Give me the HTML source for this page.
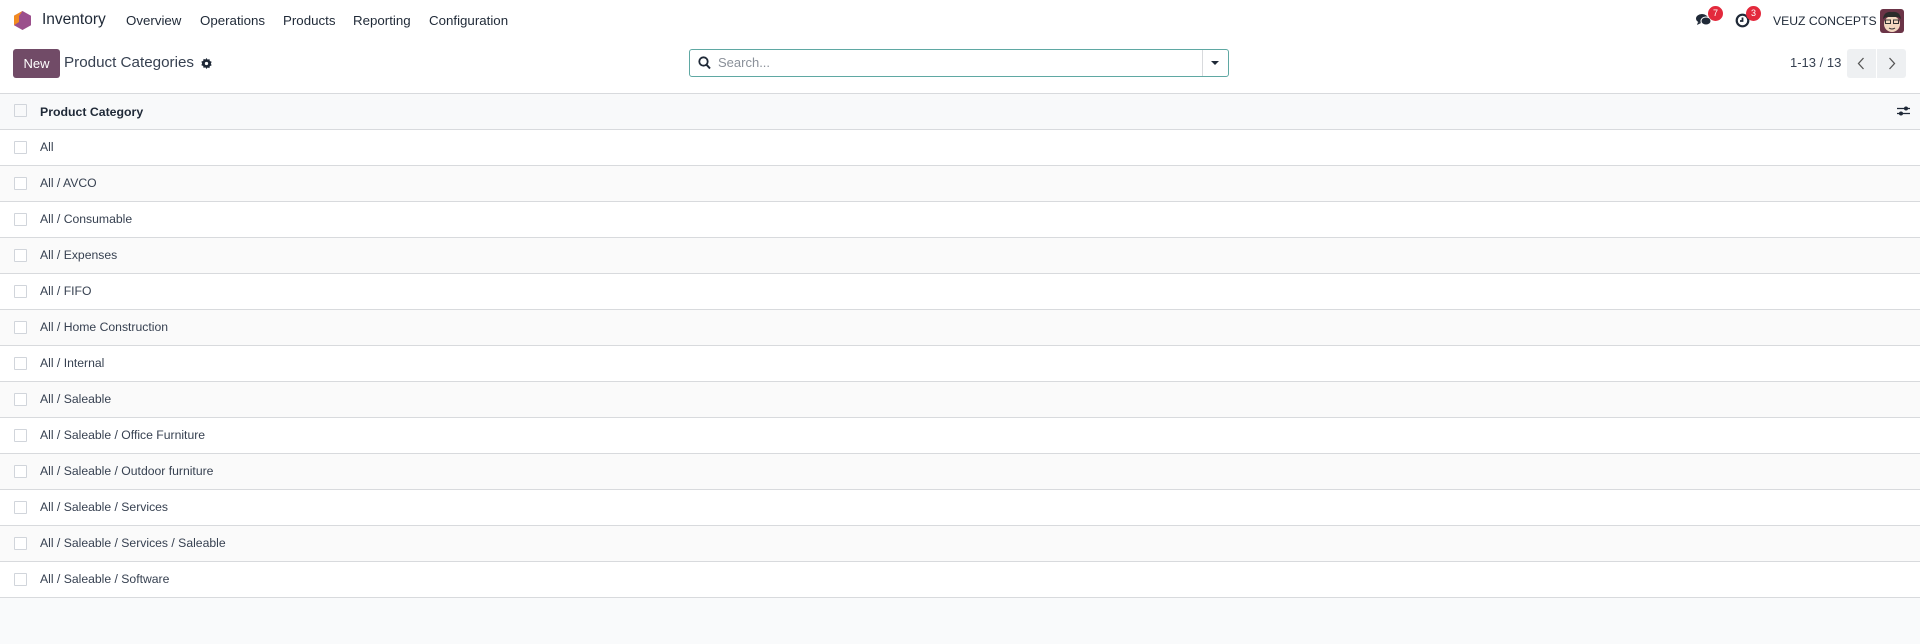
<!DOCTYPE html>
<html><head><meta charset="utf-8"><style>
*{box-sizing:border-box;margin:0;padding:0}
body{width:1920px;height:644px;overflow:hidden;background:#f9fafb;font-family:"Liberation Sans",sans-serif;color:#374151;position:relative}
.nav{position:absolute;top:0;left:0;width:1920px;height:40px;background:#fff}
.a{position:absolute;white-space:nowrap}
.nl{top:13px;font-size:13.3px;color:#1f2937}
.ctrl{position:absolute;top:40px;left:0;width:1920px;height:53px;background:#fff}
.hdr{position:absolute;top:93px;left:0;width:1920px;height:37px;background:#f8f9fa;border-top:1px solid #d8dadd;border-bottom:1px solid #d8dadd}
.row{position:absolute;left:0;width:1920px;height:36px;border-bottom:1px solid #d8dadd;background:#fff}
.row.s{background:#fafafa}
.cb{position:absolute;left:14px;top:11px;width:13px;height:13px;border:1px solid #d1d5db;background:#fff;border-radius:1px}
.t{position:absolute;left:40px;top:10px;font-size:12.2px;color:#374151;white-space:nowrap}
.badge{position:absolute;width:15px;height:15px;border-radius:8px;background:#e3293c;color:#fff;font-size:9px;text-align:center;line-height:15px}
</style></head><body>
<div class="nav">
<svg class="a" style="left:14px;top:11px" width="17" height="19" viewBox="0 0 17 19"><polygon points="8.5,0 17,4.75 17,14.25 8.5,19 0,14.25 0,4.75" fill="#9b4f8c"/><polygon points="8.5,0 0,4.75 0,14.25 5,11 5,5" fill="#f28b20"/></svg>
<div class="a" style="left:42px;top:11px;font-size:15.5px;color:#1f2937">Inventory</div>
<div class="a nl" style="left:126px">Overview</div>
<div class="a nl" style="left:200px">Operations</div>
<div class="a nl" style="left:283px">Products</div>
<div class="a nl" style="left:353px">Reporting</div>
<div class="a nl" style="left:429px">Configuration</div>
<svg class="a" style="left:1696px;top:13px" width="16" height="14" viewBox="0 0 16 14"><ellipse cx="6" cy="5.5" rx="6" ry="4.5" fill="#1f2937"/><path d="M2 9 L1 12 L5 10Z" fill="#1f2937"/><ellipse cx="10" cy="8" rx="5" ry="4" fill="#1f2937" stroke="#fff" stroke-width="1"/></svg>
<div class="badge" style="left:1708px;top:6px">7</div>
<svg class="a" style="left:1735px;top:13px" width="15" height="15" viewBox="0 0 15 15"><circle cx="7.5" cy="7.5" r="5.8" fill="none" stroke="#1f2937" stroke-width="2.2"/><path d="M7.5 4.5V8H5" stroke="#1f2937" stroke-width="1.8" fill="none"/></svg>
<div class="badge" style="left:1746px;top:6px">3</div>
<div class="a" style="left:1773px;top:14px;font-size:12.2px;color:#1f2937">VEUZ CONCEPTS</div>
<svg class="a" style="left:1880px;top:9px" width="24" height="24" viewBox="0 0 24 24"><rect width="24" height="24" rx="3" fill="#6b3447"/><ellipse cx="12" cy="15" rx="8" ry="8" fill="#f3d7c0"/><path d="M3 10 Q4 2 12 3 Q20 2 21 10 L18 8 L6 8Z" fill="#2b2b2b"/><rect x="5.5" y="11" width="5" height="3.5" fill="none" stroke="#333" stroke-width="1"/><rect x="13.5" y="11" width="5" height="3.5" fill="none" stroke="#333" stroke-width="1"/><path d="M9 19 Q12 21 15 19" stroke="#333" fill="none"/></svg>
</div>
<div class="ctrl">
<div class="a" style="left:13px;top:9px;width:47px;height:29px;background:#714b67;border-radius:3px;color:#fff;font-size:13px;text-align:center;line-height:29px">New</div>
<div class="a" style="left:64px;top:14px;font-size:15.2px;color:#374151">Product Categories</div>
<svg class="a" style="left:201px;top:18px" width="11" height="11" viewBox="0 0 12 12"><path d="M6 0l1.2 1.8 2-.6.4 2.1 2 .8-.8 2 .8 2-2 .8-.4 2.1-2-.6L6 12l-1.2-1.8-2 .6-.4-2.1-2-.8.8-2-.8-2 2-.8.4-2.1 2 .6Z" fill="#1f2937"/><circle cx="6" cy="6" r="1.8" fill="#fff"/></svg>
<div class="a" style="left:689px;top:9px;width:540px;height:28px;border:1px solid #5fa8a3;border-radius:3px;background:#fff"></div>
<svg class="a" style="left:698px;top:16px" width="13" height="14" viewBox="0 0 13 14"><circle cx="5.5" cy="5.5" r="4.2" fill="none" stroke="#1f2937" stroke-width="1.8"/><path d="M8.5 8.7L12 12.5" stroke="#1f2937" stroke-width="2"/></svg>
<div class="a" style="left:718px;top:15px;font-size:13px;color:#8a9099">Search...</div>
<div class="a" style="left:1202px;top:10px;width:1px;height:26px;background:#d8dadd"></div>
<div class="a" style="left:1211px;top:21px;width:0;height:0;border-left:4px solid transparent;border-right:4px solid transparent;border-top:4px solid #1f2937"></div>
<div class="a" style="left:1790px;top:15px;font-size:13px;color:#374151">1-13 / 13</div>
<div class="a" style="left:1847px;top:9px;width:29px;height:29px;background:#eef0f2;border-radius:3px 0 0 3px"></div>
<div class="a" style="left:1877px;top:9px;width:29px;height:29px;background:#eef0f2;border-radius:0 3px 3px 0"></div>
<svg class="a" style="left:1857px;top:17px" width="8" height="13" viewBox="0 0 8 13"><path d="M6.5 1L1.5 6.5l5 5.5" stroke="#555" fill="none" stroke-width="1.3"/></svg>
<svg class="a" style="left:1888px;top:17px" width="8" height="13" viewBox="0 0 8 13"><path d="M1.5 1l5 5.5-5 5.5" stroke="#555" fill="none" stroke-width="1.3"/></svg>
</div>
<div class="hdr">
<div class="cb" style="top:10px;background:#f8f9fa"></div>
<div class="t" style="top:11px;font-weight:bold;color:#1f2937;font-size:12.3px">Product Category</div>
<svg class="a" style="left:1897px;top:10px" width="13" height="14" viewBox="0 0 13 14"><path d="M0 4.5h13M0 9.5h13" stroke="#1f2937" stroke-width="1.3"/><circle cx="9" cy="4.5" r="2" fill="#1f2937"/><circle cx="4" cy="9.5" r="2" fill="#1f2937"/></svg>
</div>
<div class="row" style="top:130px"><div class="cb"></div><div class="t">All</div></div>
<div class="row s" style="top:166px"><div class="cb"></div><div class="t">All / AVCO</div></div>
<div class="row" style="top:202px"><div class="cb"></div><div class="t">All / Consumable</div></div>
<div class="row s" style="top:238px"><div class="cb"></div><div class="t">All / Expenses</div></div>
<div class="row" style="top:274px"><div class="cb"></div><div class="t">All / FIFO</div></div>
<div class="row s" style="top:310px"><div class="cb"></div><div class="t">All / Home Construction</div></div>
<div class="row" style="top:346px"><div class="cb"></div><div class="t">All / Internal</div></div>
<div class="row s" style="top:382px"><div class="cb"></div><div class="t">All / Saleable</div></div>
<div class="row" style="top:418px"><div class="cb"></div><div class="t">All / Saleable / Office Furniture</div></div>
<div class="row s" style="top:454px"><div class="cb"></div><div class="t">All / Saleable / Outdoor furniture</div></div>
<div class="row" style="top:490px"><div class="cb"></div><div class="t">All / Saleable / Services</div></div>
<div class="row s" style="top:526px"><div class="cb"></div><div class="t">All / Saleable / Services / Saleable</div></div>
<div class="row" style="top:562px"><div class="cb"></div><div class="t">All / Saleable / Software</div></div>
</body></html>
